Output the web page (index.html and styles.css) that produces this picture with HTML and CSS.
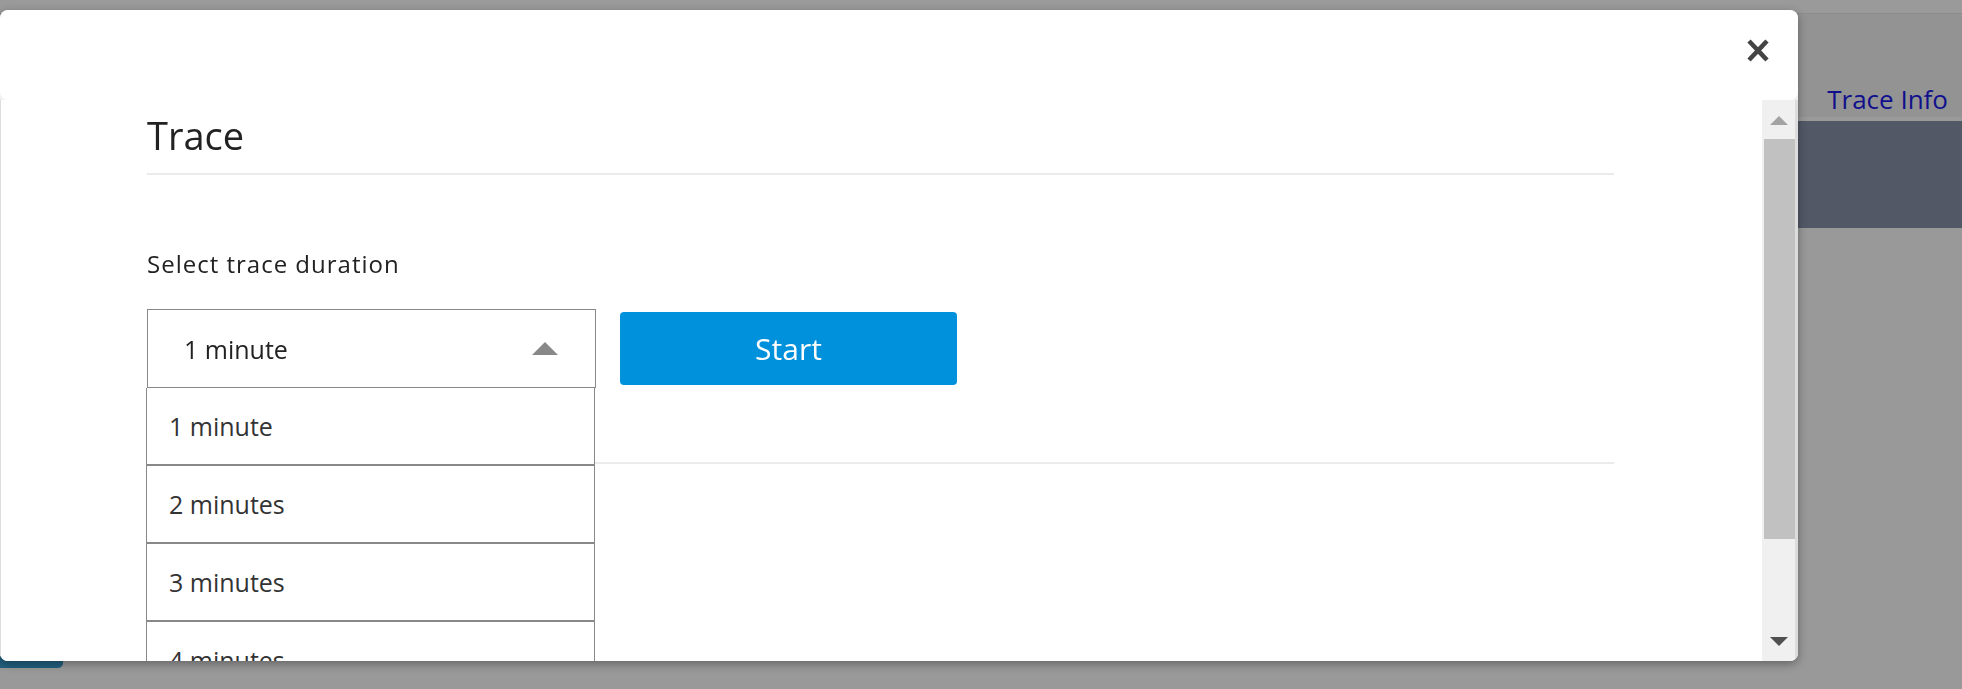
FILE: index.html
```html
<!DOCTYPE html>
<html lang="en">
<head>
    <meta charset="UTF-8">
    <meta name="viewport" content="width=device-width, initial-scale=1.0">
    <title>Trace</title>
    <link rel="stylesheet" href="styles.css">
</head>
<body>
    <div class="page">
        <div class="topbar"></div>
        <div class="tabs">
            <a class="tab-link" href="#">Trace Info</a>
        </div>
        <div class="band"></div>
        <div class="page-rest">
            <div class="page-btn"></div>
        </div>
    </div>

    <div class="modal">
        <div class="modal-header">
            <button class="close" aria-label="Close">
                <svg width="22" height="23" viewBox="0 0 22 23">
                    <path d="M2 2 L20 21 M20 2 L2 21" stroke="#444" stroke-width="4.5" fill="none"/>
                </svg>
            </button>
        </div>
        <div class="modal-body">
            <div class="modal-content">
                <h2 class="title">Trace</h2>
                <label class="field-label">Select trace duration</label>
                <div class="controls">
                    <div class="select">
                        <div class="select-box">
                            <span>1 minute</span>
                            <span class="caret"></span>
                        </div>
                        <ul class="options">
                            <li>1 minute</li>
                            <li>2 minutes</li>
                            <li>3 minutes</li>
                            <li>4 minutes</li>
                            <li>5 minutes</li>
                        </ul>
                    </div>
                    <button class="start">Start</button>
                </div>
                <div class="divider"></div>
            </div>
            <div class="scrollbar">
                <div class="arrow up"></div>
                <div class="thumb"></div>
                <div class="arrow down"></div>
            </div>
        </div>
    </div>
</body>
</html>
```
FILE: styles.css
```css
body {
    margin: 0;
    height: 689px;
    overflow: hidden;
    background-color: #999;
    font-family: "Open Sans", sans-serif;
}
.topbar {
    height: 13px;
    background-color: #9a9a9a;
    border-bottom: 1px solid #8c8c8c;
}
.tabs {
    height: 107px;
    box-sizing: border-box;
    display: flex;
    justify-content: flex-end;
    align-items: flex-end;
    padding: 0 14px 4px 0;
    background-color: #939393;
    border-bottom: 4px solid #9a9a9a;
}
.tab-link {
    font-size: 26px;
    line-height: 28px;
    color: #10108c;
    text-decoration: none;
}
.band {
    height: 107px;
    background-color: #525866;
}
.page-btn {
    width: 63px;
    height: 38px;
    margin-top: 402px;
    background-color: #22607f;
    border-radius: 0 0 5px 0;
}
.modal {
    position: fixed;
    top: 10px;
    left: 0;
    width: 1798px;
    height: 651px;
    display: flex;
    flex-direction: column;
    overflow: hidden;
    background-color: #f0f0f0;
    border-radius: 8px;
    box-shadow: 0 3px 10px rgba(0, 0, 0, 0.35);
}
.modal-header {
    height: 90px;
    flex: none;
    box-sizing: border-box;
    display: flex;
    justify-content: flex-end;
    padding: 29px 29px 0 0;
    background-color: #fff;
    border-radius: 8px;
}
.close {
    display: block;
    height: 23px;
    padding: 0;
    border: none;
    background: none;
    cursor: pointer;
}
.close svg {
    display: block;
}
.modal-body {
    flex: 1;
    min-height: 0;
    display: flex;
}
.modal-content {
    flex: 1;
    min-width: 0;
    overflow: hidden;
    padding: 12px 148px 0 146px;
    background-color: #fff;
    border-left: 1px solid #dcdcdc;
}
.title {
    margin: 0;
    padding-bottom: 15px;
    font-size: 38px;
    font-weight: normal;
    line-height: 46px;
    color: #222;
    border-bottom: 2px solid #ebebeb;
}
.field-label {
    display: block;
    margin-top: 73px;
    font-size: 24px;
    line-height: 32px;
    letter-spacing: 1px;
    color: #222;
}
.controls {
    display: flex;
    align-items: center;
    gap: 24px;
    margin-top: 29px;
}
.select {
    position: relative;
    width: 449px;
}
.select-box {
    height: 79px;
    box-sizing: border-box;
    display: flex;
    align-items: center;
    justify-content: space-between;
    padding: 0 37px 0 36px;
    font-size: 25px;
    color: #222;
    border: 1px solid #888;
}
.caret {
    width: 0;
    height: 0;
    border-left: 13px solid transparent;
    border-right: 13px solid transparent;
    border-bottom: 13px solid #888;
}
.options {
    position: absolute;
    top: 100%;
    left: -1px;
    width: 449px;
    box-sizing: border-box;
    margin: 0;
    padding: 0;
    list-style: none;
    background-color: #fff;
    border-left: 1px solid #888;
    border-right: 1px solid #888;
}
.options li {
    height: 78px;
    box-sizing: border-box;
    padding-left: 22px;
    font-size: 25px;
    line-height: 76px;
    color: #333;
    border-bottom: 2px solid #888;
}
.start {
    width: 337px;
    height: 73px;
    padding: 0;
    font-family: inherit;
    font-size: 30px;
    color: #fff;
    background-color: #0091dc;
    border: none;
    border-radius: 4px;
    cursor: pointer;
}
.divider {
    height: 2px;
    margin-top: 74px;
    background-color: #ebebeb;
}
.scrollbar {
    width: 36px;
    flex: none;
    display: flex;
    flex-direction: column;
    align-items: center;
    padding-top: 16px;
    box-sizing: border-box;
    background-color: #f0f0f0;
    border-right: 3px solid #dcdcdc;
}
.arrow {
    width: 0;
    height: 0;
    border-left: 9px solid transparent;
    border-right: 9px solid transparent;
}
.arrow.up {
    border-bottom: 9px solid #a3a3a3;
}
.arrow.down {
    margin-top: 98px;
    border-top: 9px solid #505050;
}
.thumb {
    align-self: stretch;
    height: 400px;
    margin: 14px 0 0 2px;
    background-color: #c1c1c1;
}
```
